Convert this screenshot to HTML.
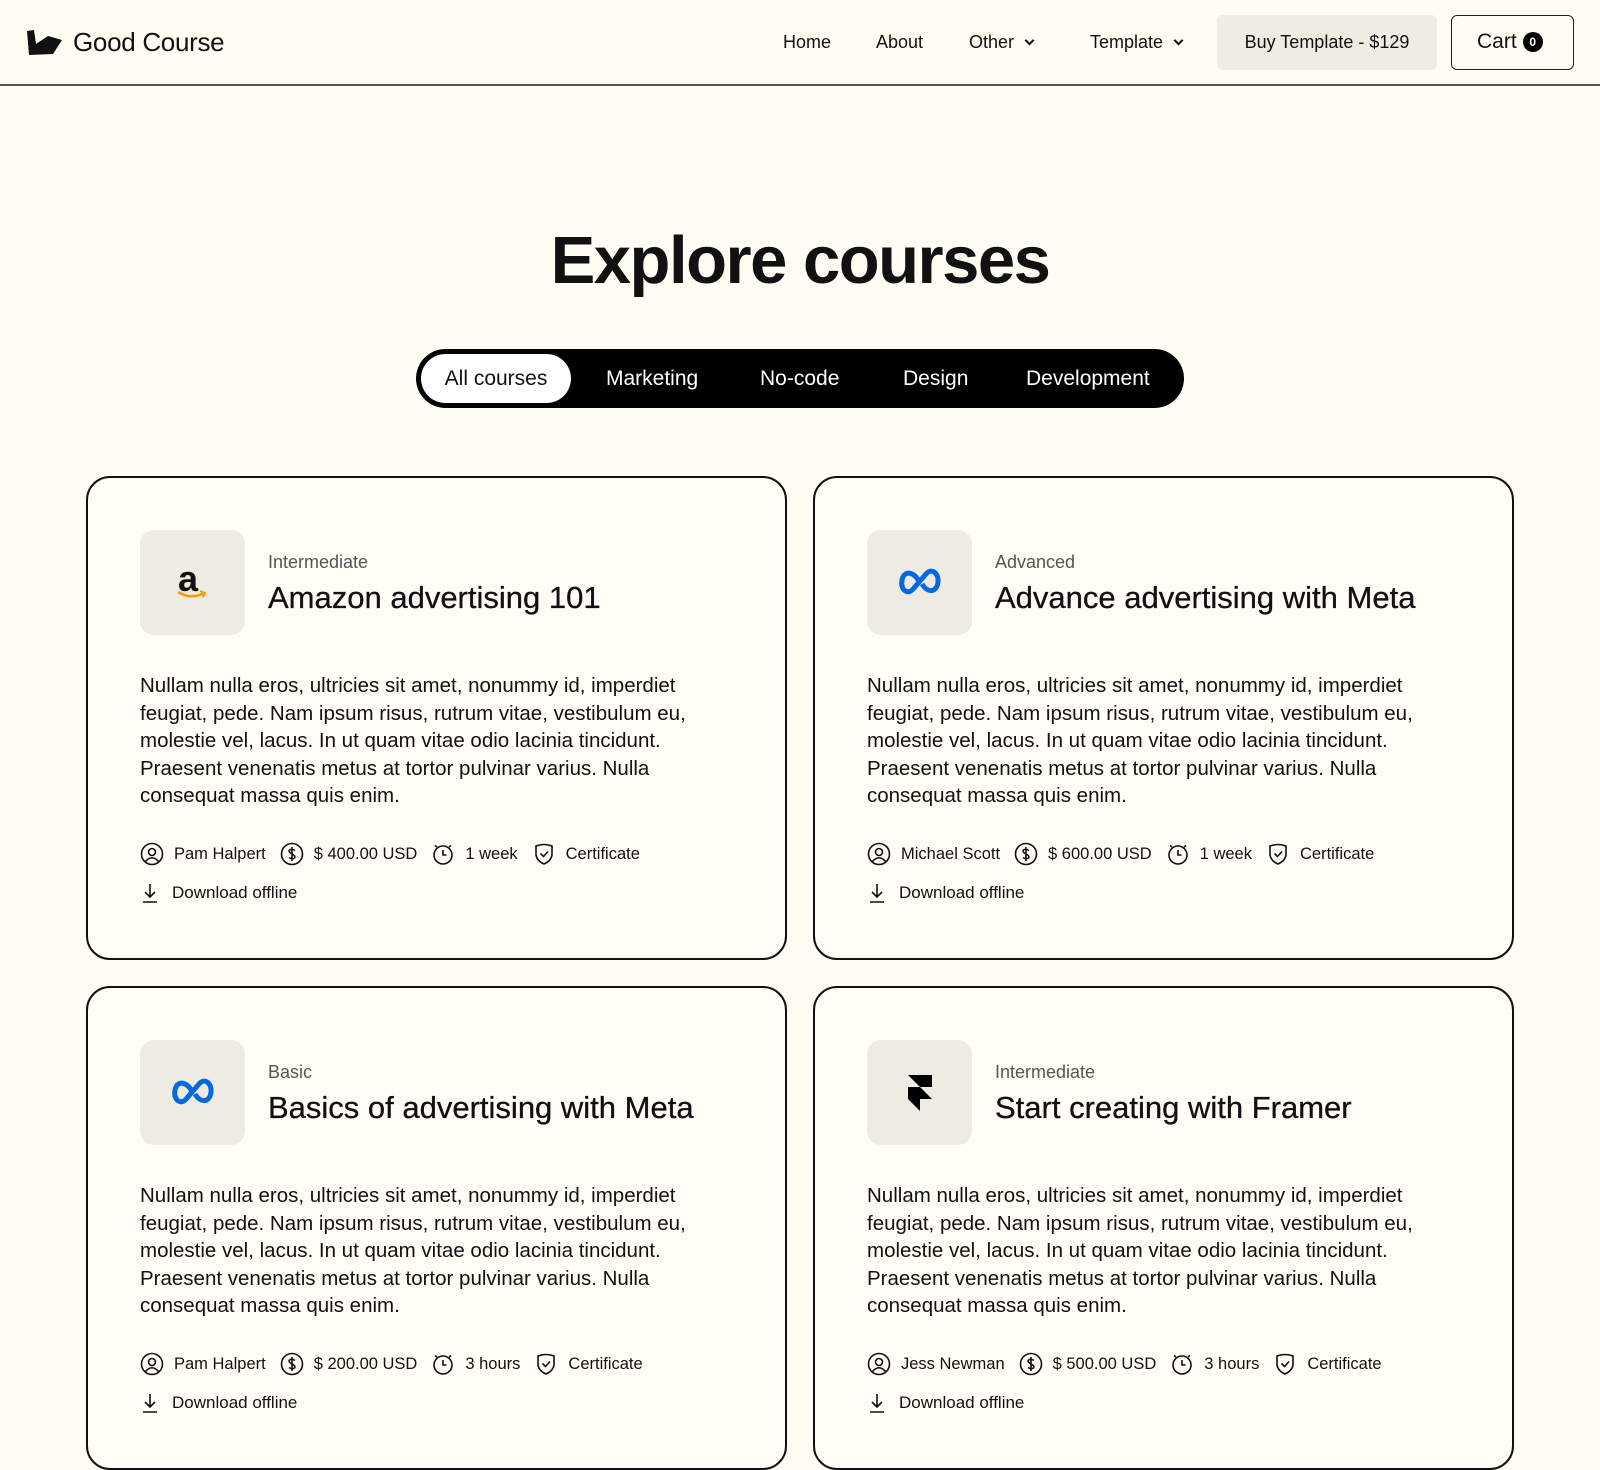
<!DOCTYPE html>
<html><head><meta charset="utf-8"><style>
*{box-sizing:border-box;margin:0;padding:0}
body{width:1600px;height:1400px;overflow:hidden;background:#fffcf3;font-family:"Liberation Sans",sans-serif;color:#111;position:relative}
.nav{position:absolute;left:0;top:0;width:1600px;height:86px;border-bottom:2px solid #555}
.logo{position:absolute;left:26px;top:30px}
.brand{position:absolute;left:73px;top:27px;font-size:26px;letter-spacing:-0.3px}
.ni{position:absolute;top:32px;font-size:18px}
.chev{display:inline-block;width:7px;height:7px;border-right:2px solid #111;border-bottom:2px solid #111;transform:rotate(45deg);margin-left:12px;position:relative;top:-4px}
.buy{position:absolute;left:1217px;top:15px;width:220px;height:55px;background:#efece4;border-radius:6px;font-size:18px;text-align:center;line-height:55px}
.cart{position:absolute;left:1451px;top:15px;width:123px;height:55px;border:1.5px solid #222;border-radius:6px;font-size:21px;line-height:52px;padding-left:25px}
.cart b{display:inline-block;width:20px;height:20px;border-radius:50%;background:#000;color:#fff;font-size:12px;line-height:20px;text-align:center;vertical-align:2px;margin-left:6px}
h1{position:absolute;left:0;width:1600px;top:222px;text-align:center;font-size:67px;font-weight:700;letter-spacing:-1.5px}
.tabs{position:absolute;left:416px;top:349px;width:768px;height:59px;background:#000;border-radius:30px}
.tab{position:absolute;top:0;line-height:59px;color:#fff;font-size:21px}
.tab.on{background:#fff;color:#111;top:5px;height:49px;line-height:49px;border-radius:25px;left:5px;width:150px;text-align:center}
.card{position:absolute;width:701px;height:484px;border:2px solid #111;border-radius:24px;background:#fffdf6}
.ib{position:absolute;left:52px;top:52px;width:105px;height:105px;border-radius:14px;background:#eeebe3}
.lvl{position:absolute;left:180px;top:74px;font-size:18px;color:#555}
.ttl{position:absolute;left:180px;top:102px;font-size:31px;font-weight:500;white-space:nowrap;-webkit-text-stroke:0.3px #111}
.p{position:absolute;left:52px;top:194px;width:570px;font-size:20.5px;line-height:27.6px}
.meta{position:absolute;left:52px;top:364px;font-size:16.5px;display:flex;align-items:center;white-space:nowrap}
.meta svg{margin-right:10px}
.meta span{margin-right:14px}
.dl{position:absolute;left:52px;top:404px;font-size:17px;display:flex;align-items:center}
.dl svg{margin-right:12px}
</style></head><body>
<div class="nav">
<svg class="logo" width="36" height="26" viewBox="0 0 36 26"><path d="M1 1 L8 0 L10 14 L22 6 L36 10 L27 24 L3 25 Z" fill="#111"/></svg>
<div class="brand">Good Course</div>
<div class="ni" style="left:783px">Home</div>
<div class="ni" style="left:876px">About</div>
<div class="ni" style="left:969px">Other<span class="chev"></span></div>
<div class="ni" style="left:1090px">Template<span class="chev"></span></div>
<div class="buy">Buy Template - $129</div>
<div class="cart">Cart<b>0</b></div>
</div>
<h1>Explore courses</h1>
<div class="tabs">
<div class="tab on">All courses</div>
<div class="tab" style="left:190px">Marketing</div>
<div class="tab" style="left:344px">No-code</div>
<div class="tab" style="left:487px">Design</div>
<div class="tab" style="left:610px">Development</div>
</div>

<div class="card" style="left:86px;top:476px">
<div class="ib"><div style="position:absolute;left:38px;top:28px;font-size:36px;font-weight:700">a</div><svg style="position:absolute;left:36px;top:60px" width="32" height="10"><path d="M2 2 Q15 10 28 3" stroke="#f90" stroke-width="2.5" fill="none"/><path d="M24 1 L29 3 L27 7" stroke="#f90" stroke-width="2" fill="none"/></svg></div>
<div class="lvl">Intermediate</div><div class="ttl">Amazon advertising 101</div>
<div class="p">Nullam nulla eros, ultricies sit amet, nonummy id, imperdiet feugiat, pede. Nam ipsum risus, rutrum vitae, vestibulum eu, molestie vel, lacus. In ut quam vitae odio lacinia tincidunt. Praesent venenatis metus at tortor pulvinar varius. Nulla consequat massa quis enim.</div>
<div class="meta">
<svg width="24" height="24" viewBox="0 0 24 24" fill="none" stroke="#111" stroke-width="1.6"><circle cx="12" cy="12" r="10.5"/><circle cx="12" cy="10" r="3.5"/><path d="M5.5 19.5 Q12 12 18.5 19.5"/></svg><span>Pam Halpert</span>
<svg width="24" height="24" viewBox="0 0 24 24" fill="none" stroke="#111" stroke-width="1.6"><circle cx="12" cy="12" r="10.5"/><path d="M15 8.5 Q12 6.5 9.5 8 Q8 10 12 12 Q16 14 14.5 16 Q12 17.5 9 15.5 M12 5v14"/></svg><span>$ 400.00 USD</span>
<svg width="24" height="24" viewBox="0 0 24 24" fill="none" stroke="#111" stroke-width="1.6"><circle cx="12" cy="13" r="9"/><path d="M12 8v5h3.5M4 3.5l2 1.5M20 3.5l-2 1.5"/></svg><span>1 week</span>
<svg width="24" height="24" viewBox="0 0 24 24" fill="none" stroke="#111" stroke-width="1.6"><path d="M4 4 Q12 1 20 4 V13 Q19 19 12 22 Q5 19 4 13 Z"/><path d="M8.5 11.5l3 3 4.5-5"/></svg><span>Certificate</span>
</div>
<div class="dl"><svg width="20" height="22" viewBox="0 0 20 22" fill="none" stroke="#111" stroke-width="1.6"><path d="M10 2v13M5 10l5 5 5-5M3 20h14"/></svg>Download offline</div>
</div>

<div class="card" style="left:813px;top:476px">
<div class="ib"><svg style="position:absolute;left:31px;top:38px" width="44" height="30" viewBox="0 0 44 30"><path d="M22 15 C16 3 6 2 4 12 C2 22 10 28 16 20 L28 6 C34 -1 41 6 40 14 C39 24 30 26 24 16" stroke="#0668e1" stroke-width="5" fill="none"/></svg></div>
<div class="lvl">Advanced</div><div class="ttl">Advance advertising with Meta</div>
<div class="p">Nullam nulla eros, ultricies sit amet, nonummy id, imperdiet feugiat, pede. Nam ipsum risus, rutrum vitae, vestibulum eu, molestie vel, lacus. In ut quam vitae odio lacinia tincidunt. Praesent venenatis metus at tortor pulvinar varius. Nulla consequat massa quis enim.</div>
<div class="meta">
<svg width="24" height="24" viewBox="0 0 24 24" fill="none" stroke="#111" stroke-width="1.6"><circle cx="12" cy="12" r="10.5"/><circle cx="12" cy="10" r="3.5"/><path d="M5.5 19.5 Q12 12 18.5 19.5"/></svg><span>Michael Scott</span>
<svg width="24" height="24" viewBox="0 0 24 24" fill="none" stroke="#111" stroke-width="1.6"><circle cx="12" cy="12" r="10.5"/><path d="M15 8.5 Q12 6.5 9.5 8 Q8 10 12 12 Q16 14 14.5 16 Q12 17.5 9 15.5 M12 5v14"/></svg><span>$ 600.00 USD</span>
<svg width="24" height="24" viewBox="0 0 24 24" fill="none" stroke="#111" stroke-width="1.6"><circle cx="12" cy="13" r="9"/><path d="M12 8v5h3.5M4 3.5l2 1.5M20 3.5l-2 1.5"/></svg><span>1 week</span>
<svg width="24" height="24" viewBox="0 0 24 24" fill="none" stroke="#111" stroke-width="1.6"><path d="M4 4 Q12 1 20 4 V13 Q19 19 12 22 Q5 19 4 13 Z"/><path d="M8.5 11.5l3 3 4.5-5"/></svg><span>Certificate</span>
</div>
<div class="dl"><svg width="20" height="22" viewBox="0 0 20 22" fill="none" stroke="#111" stroke-width="1.6"><path d="M10 2v13M5 10l5 5 5-5M3 20h14"/></svg>Download offline</div>
</div>

<div class="card" style="left:86px;top:986px">
<div class="ib"><svg style="position:absolute;left:31px;top:38px" width="44" height="30" viewBox="0 0 44 30"><path d="M22 15 C16 3 6 2 4 12 C2 22 10 28 16 20 L28 6 C34 -1 41 6 40 14 C39 24 30 26 24 16" stroke="#0668e1" stroke-width="5" fill="none"/></svg></div>
<div class="lvl">Basic</div><div class="ttl">Basics of advertising with Meta</div>
<div class="p">Nullam nulla eros, ultricies sit amet, nonummy id, imperdiet feugiat, pede. Nam ipsum risus, rutrum vitae, vestibulum eu, molestie vel, lacus. In ut quam vitae odio lacinia tincidunt. Praesent venenatis metus at tortor pulvinar varius. Nulla consequat massa quis enim.</div>
<div class="meta">
<svg width="24" height="24" viewBox="0 0 24 24" fill="none" stroke="#111" stroke-width="1.6"><circle cx="12" cy="12" r="10.5"/><circle cx="12" cy="10" r="3.5"/><path d="M5.5 19.5 Q12 12 18.5 19.5"/></svg><span>Pam Halpert</span>
<svg width="24" height="24" viewBox="0 0 24 24" fill="none" stroke="#111" stroke-width="1.6"><circle cx="12" cy="12" r="10.5"/><path d="M15 8.5 Q12 6.5 9.5 8 Q8 10 12 12 Q16 14 14.5 16 Q12 17.5 9 15.5 M12 5v14"/></svg><span>$ 200.00 USD</span>
<svg width="24" height="24" viewBox="0 0 24 24" fill="none" stroke="#111" stroke-width="1.6"><circle cx="12" cy="13" r="9"/><path d="M12 8v5h3.5M4 3.5l2 1.5M20 3.5l-2 1.5"/></svg><span>3 hours</span>
<svg width="24" height="24" viewBox="0 0 24 24" fill="none" stroke="#111" stroke-width="1.6"><path d="M4 4 Q12 1 20 4 V13 Q19 19 12 22 Q5 19 4 13 Z"/><path d="M8.5 11.5l3 3 4.5-5"/></svg><span>Certificate</span>
</div>
<div class="dl"><svg width="20" height="22" viewBox="0 0 20 22" fill="none" stroke="#111" stroke-width="1.6"><path d="M10 2v13M5 10l5 5 5-5M3 20h14"/></svg>Download offline</div>
</div>

<div class="card" style="left:813px;top:986px">
<div class="ib"><svg style="position:absolute;left:40px;top:34px" width="26" height="38" viewBox="0 0 26 38"><path d="M1 1 H25 V13 H13 Z M1 13 H13 L25 25 H13 V37 L1 25 Z" fill="#000"/></svg></div>
<div class="lvl">Intermediate</div><div class="ttl">Start creating with Framer</div>
<div class="p">Nullam nulla eros, ultricies sit amet, nonummy id, imperdiet feugiat, pede. Nam ipsum risus, rutrum vitae, vestibulum eu, molestie vel, lacus. In ut quam vitae odio lacinia tincidunt. Praesent venenatis metus at tortor pulvinar varius. Nulla consequat massa quis enim.</div>
<div class="meta">
<svg width="24" height="24" viewBox="0 0 24 24" fill="none" stroke="#111" stroke-width="1.6"><circle cx="12" cy="12" r="10.5"/><circle cx="12" cy="10" r="3.5"/><path d="M5.5 19.5 Q12 12 18.5 19.5"/></svg><span>Jess Newman</span>
<svg width="24" height="24" viewBox="0 0 24 24" fill="none" stroke="#111" stroke-width="1.6"><circle cx="12" cy="12" r="10.5"/><path d="M15 8.5 Q12 6.5 9.5 8 Q8 10 12 12 Q16 14 14.5 16 Q12 17.5 9 15.5 M12 5v14"/></svg><span>$ 500.00 USD</span>
<svg width="24" height="24" viewBox="0 0 24 24" fill="none" stroke="#111" stroke-width="1.6"><circle cx="12" cy="13" r="9"/><path d="M12 8v5h3.5M4 3.5l2 1.5M20 3.5l-2 1.5"/></svg><span>3 hours</span>
<svg width="24" height="24" viewBox="0 0 24 24" fill="none" stroke="#111" stroke-width="1.6"><path d="M4 4 Q12 1 20 4 V13 Q19 19 12 22 Q5 19 4 13 Z"/><path d="M8.5 11.5l3 3 4.5-5"/></svg><span>Certificate</span>
</div>
<div class="dl"><svg width="20" height="22" viewBox="0 0 20 22" fill="none" stroke="#111" stroke-width="1.6"><path d="M10 2v13M5 10l5 5 5-5M3 20h14"/></svg>Download offline</div>
</div>
</body></html>
